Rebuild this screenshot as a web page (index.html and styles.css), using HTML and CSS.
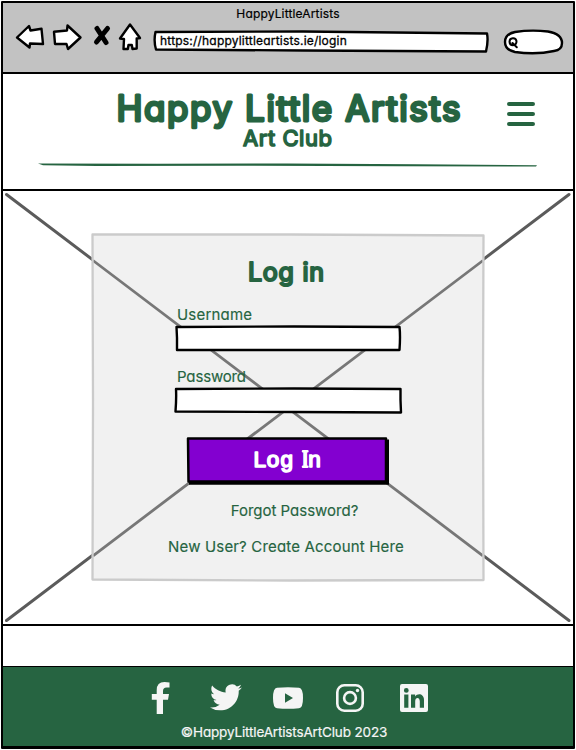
FILE: index.html
```html
<!DOCTYPE html>
<html lang="en">
<head>
<meta charset="utf-8">
<title>HappyLittleArtists</title>
<link rel="stylesheet" href="styles.css">
</head>
<body>
<div class="window">
  <div class="chrome">
    <div class="tab-title">HappyLittleArtists</div>
    <div class="toolbar">
      <svg class="nav" width="130" height="32" viewBox="14 22 130 32">
        <path class="shape" d="M17 37.500L29 26L30.500 30.500L41.500 28.800L43 44L30 43.500L29.500 47.500Z"/>
        <path class="shape" d="M54 31.800L67 30.500L67.500 25.500L80.500 37.500L68 49L66.500 44L55 44Z"/>
        <path class="cross" d="M97 28.500L106 42.500M107.500 28.500L96.500 42"/>
        <path class="shape" d="M130 24.500L140 38L136.700 38.500V48.500L132.500 49L131.800 45H128.500L127.800 49H123.500L124 39L120 38.500Z"/>
      </svg>
      <div class="address">
        <svg class="sketch" viewBox="0 0 336 24"><path class="shape" d="M2.500 3L150 2.500L334 4.500Q335.500 12 333 22.500L150 21.500L3 20.500Q.5 12 2.500 3Z"/></svg>
        <span class="url">https://happylittleartists.ie/login</span>
      </div>
      <svg class="search" width="62" height="28" viewBox="0 0 62 28">
        <path class="shape" d="M3 14Q3 6 13 4Q29 1.500 46 3.500Q60 6 60 15Q60 22 52 23Q34 27 13 24Q3 22 3 14Z"/>
        <path class="lens" d="M14.500 13.200A3.500 3.500 0 1 0 11 17.200Q14.500 17 14.500 13.200M10.500 15L14.800 19.200"/>
      </svg>
    </div>
  </div>

  <header class="header">
    <svg class="brand" width="360" height="76" viewBox="108 78 360 76">
      <text class="brand-name" x="116.500" y="121" textLength="344">Happy Little Artists</text>
      <text class="brand-sub" x="243" y="146" textLength="89">Art Club</text>
    </svg>
    <svg class="menu" width="30" height="26" viewBox="0 0 30 26"><path d="M3 3H27M3 13H27M3 23H27"/></svg>
    <svg class="rule" width="502" height="6" viewBox="0 0 502 6"><path d="M1 1.500L120 1.800L250 1.500L380 2.200L500 3.200L499 4.600L360 4.200L200 3.800L60 4L6 3.200Z"/></svg>
  </header>

  <main class="hero">
    <svg class="backdrop" viewBox="0 0 569 433"><path d="M3 3.500L565.500 429.500M565.500 3.500L3 429.500"/></svg>
    <form class="card">
      <svg class="sketch" viewBox="0 0 394 348">
        <path class="card-fill" d="M2 1.500L200 1.500L392.500 3L392 150L392.500 347L200 347.500L2 346.500L2.500 170Z"/>
        <path class="card-lines" d="M2 27.500L392 322.800M392 27.500L2 322.800"/>
        <path class="card-edge" d="M1.500 1.500L200 1.500L392.500 2.500L392 150L392.500 347L200 347.500L1.500 346.500L2 170Z"/>
      </svg>
      <svg class="card-title" width="90" height="36" viewBox="241 254 90 36"><text x="248" y="280" textLength="76">Log in</text></svg>
      <label class="label user" for="user">Username</label>
      <div class="field">
        <svg class="sketch" viewBox="0 0 228 28"><path class="shape" d="M2.500 3L120 2.500L225.500 3Q226.500 12 225.500 26L120 26L3 26L3 14Z"/></svg>
        <input id="user" type="text">
      </div>
      <label class="label pass" for="pass">Password</label>
      <div class="field">
        <svg class="sketch" viewBox="0 0 228 28"><path class="shape" d="M2 3L120 2.500L226.500 3L226.500 14L227 26.500L120 26L1.500 25.500Q2.500 12 2 3Z"/></svg>
        <input id="pass" type="password">
      </div>
      <button class="submit" type="button">
        <svg class="sketch" viewBox="0 0 204 50"><path class="shadow" d="M3 45L200 45L200 3.500L203 3.500L203 48.800L3 48.800Z"/><path class="button-shape" d="M2 2.500L200 2.500L200 45.500L2.500 45.500Z"/></svg>
        <svg class="button-label" width="80" height="30" viewBox="247 445 80 30">
          <text x="252.500 265.800 279.600 292 300.900 307.300" y="467">Log In</text>
          <path class="serifs" d="M302 451.200H306.400M302 466.800H306.400"/>
        </svg>
      </button>
      <a class="link forgot">Forgot Password?</a>
      <a class="link create">New User? Create Account Here</a>
    </form>
  </main>

  <div class="spacer"></div>

  <footer class="footer">
    <div class="social">
      <svg width="20" height="32" viewBox="0 0 20 32"><path d="M5.700 32V17.800H.8V12H5.700V8.200Q5.700 0 13.500 0Q16 0 18.500.5V5.500H15.500Q12 5.500 12 9V12H18L17 17.800H12V32Z"/></svg>
      <svg width="32" height="28" viewBox="0 3 24 19"><path d="M23.950 4.570a10 10 0 0 1-2.820.77 4.960 4.960 0 0 0 2.160-2.720c-.95.550-2 .950-3.130 1.190a4.920 4.920 0 0 0-8.380 4.480C7.690 8.090 4.070 6.130 1.640 3.160a4.820 4.820 0 0 0-.67 2.480c0 1.710.87 3.210 2.190 4.100a4.900 4.900 0 0 1-2.230-.62v.06a4.920 4.920 0 0 0 3.950 4.830 5 5 0 0 1-2.210.08 4.940 4.940 0 0 0 4.600 3.420A9.870 9.870 0 0 1 0 19.540a13.990 13.990 0 0 0 7.550 2.210c9.050 0 14-7.500 14-13.990 0-.21 0-.42-.02-.630a9.940 9.940 0 0 0 2.420-2.560Z"/></svg>
      <svg width="30" height="22" viewBox="0 0 30 22"><path fill-rule="evenodd" d="M4 .8Q15-.5 26 .8Q30 1 30 11Q30 21 26 21.200Q15 22.500 4 21.200Q0 21 0 11Q0 1 4 .8ZM12 6.300V15.700L20 11Z"/></svg>
      <svg width="28" height="28" viewBox="0 0 28 28"><g class="outline"><rect x="1.300" y="1.300" width="25.400" height="25.400" rx="7"/><circle cx="14" cy="14" r="5.900"/></g><circle cx="21.500" cy="6.500" r="1.700"/></svg>
      <svg width="28" height="28" viewBox="0 0 28 28"><path fill-rule="evenodd" d="M2 0H26Q28 0 28 2V26Q28 28 26 28H2Q0 28 0 26V2Q0 0 2 0ZM4.200 10.600V23.800H8.400V10.600ZM6.300 4A2.400 2.400 0 1 0 6.300 8.800A2.400 2.400 0 0 0 6.300 4ZM11 10.600V23.800H15.200V17.300C15.200 12.800 19.800 12.900 19.800 17.300V23.800H24V16C24 9.500 17.500 8.800 15.100 12.500V10.600Z"/></svg>
    </div>
    <div class="copyright">©HappyLittleArtistsArtClub 2023</div>
  </footer>
</div>
</body>
</html>
```
FILE: styles.css
```css
* { box-sizing: border-box; }

body {
  margin: 0;
  background: #fff;
  color: #000;
  font-family: Inter, "Liberation Sans", sans-serif;
  font-feature-settings: "cv11";
}

.window {
  width: 574px;
  height: 748px;
  margin: 1px 0 0 1px;
  border: 2px solid #000;
  border-bottom-width: 3px;
  border-radius: 1px;
  display: flex;
  flex-direction: column;
}

.shape { fill: #fff; stroke: #000; stroke-width: 2.400; stroke-linejoin: round; }
.cross { fill: none; stroke: #000; stroke-width: 5; stroke-linecap: round; }
.lens { fill: none; stroke: #000; stroke-width: 2; stroke-linecap: round; }
.sketch { position: absolute; inset: 0; width: 100%; height: 100%; overflow: visible; }

.chrome { height: 71px; background: #c2c2c2; border-bottom: 2px solid #000; }
.tab-title {
  height: 19px;
  padding-top: 3px;
  text-align: center;
  font-size: 12px;
  letter-spacing: .15px;
  line-height: 15px;
  -webkit-text-stroke: .2px #000;
}
.toolbar { display: flex; padding-left: 11px; }
.nav { margin-right: 9px; }
.address { position: relative; width: 336px; height: 24px; margin-top: 7px; padding-left: 7px; }
.url {
  position: relative;
  display: block;
  padding-top: 1px;
  font-size: 12px;
  letter-spacing: .2px;
  line-height: 22px;
  white-space: nowrap;
  -webkit-text-stroke: .3px #000;
}
.search { margin: 6px 0 0 13px; }

.header {
  height: 117px;
  border-bottom: 2px solid #000;
  display: grid;
  grid-template-columns: 105px 360px 1fr;
  grid-template-rows: 86px 1fr;
  color: #266441;
}
.brand { grid-column: 2; margin-top: 4px; }
.brand text { fill: #266441; stroke: #266441; stroke-linejoin: round; stroke-linecap: round; }
.brand-name { font-size: 35px; font-weight: 400; stroke-width: 2.900px; }
.brand-sub { font-size: 22px; font-weight: 400; stroke-width: 1.600px; }
.menu { margin: 27px 0 0 38px; }
.menu path { stroke: #266441; stroke-width: 4; stroke-linecap: round; }
.rule { grid-column: 1 / -1; margin: 2px 0 0 34px; fill: #266441; }

.hero {
  position: relative;
  height: 435px;
  border-bottom: 2px solid #000;
  padding-top: 42px;
}
.backdrop { position: absolute; inset: 0; width: 100%; height: 433px; }
.backdrop path { stroke: #5b5b5b; stroke-width: 3; stroke-linecap: round; }

.card {
  position: relative;
  width: 394px;
  height: 348px;
  margin-left: 88px;
  padding-top: 22px;
  display: flex;
  flex-direction: column;
  align-items: center;
  color: #266441;
}
.card-fill { fill: #f1f1f1; }
.card-lines { stroke: #777; stroke-width: 2.800; }
.card-edge { fill: none; stroke: #cbcbcb; stroke-width: 2.300; stroke-linejoin: round; }
.card > *:not(.sketch) { position: relative; }
.card-title { margin-left: -4px; flex: none; }
.card-title text {
  fill: #266441;
  stroke: #266441;
  stroke-width: 2.100px;
  stroke-linejoin: round;
  font-size: 25px;
  font-weight: 400;
}
.label { align-self: flex-start; margin-left: 86px; font-size: 15px; letter-spacing: .2px; line-height: 20px; -webkit-text-stroke: .15px #266441; }
.user { margin-top: 14px; }
.pass { margin-top: 14px; letter-spacing: -.15px; }
.field { width: 228px; height: 28px; flex: none; margin: -1px 0 1px; }
.field input { position: relative; display: block; width: 100%; height: 100%; border: 0; padding: 0 8px; background: transparent; outline: 0; }
.submit { width: 204px; height: 50px; flex: none; border: 0; padding: 0; margin: 21px 0 0 0; background: none; }
.button-shape { fill: #8300d0; stroke: #000; stroke-width: 2.500; stroke-linejoin: round; }
.button-label { position: relative; display: block; margin: -3px auto 0; }
.button-label text {
  fill: #fff;
  stroke: #fff;
  stroke-width: 1.600px;
  stroke-linejoin: round;
  font-size: 22.500px;
  font-weight: 400;
}
.serifs { stroke: #fff; stroke-width: 2.600; stroke-linecap: round; }
.link { font-size: 15px; line-height: 20px; white-space: nowrap; -webkit-text-stroke: .15px #266441; }
.forgot { margin: 15px 0 0 13px; }
.create { margin: 16px 0 0 -4px; letter-spacing: .17px; }

.spacer { flex: 1; }

.footer {
  height: 80px;
  border-top: 1px solid #000;
  background: #266441;
  color: #f5f5f5;
}
.social { height: 56px; padding: 5px 0 0 148px; display: flex; align-items: center; fill: #f5f5f5; }
.social svg:nth-child(2) { margin-left: 39px; }
.social svg:nth-child(3) { margin-left: 31px; }
.social svg:nth-child(4) { margin-left: 33px; }
.social svg:nth-child(5) { margin-left: 36px; }
.outline { fill: none; stroke: #f5f5f5; stroke-width: 2.600; }
.copyright { padding-right: 8px; text-align: center; font-size: 13.500px; letter-spacing: -.15px; line-height: 18px; -webkit-text-stroke: .2px #f5f5f5; }
```
